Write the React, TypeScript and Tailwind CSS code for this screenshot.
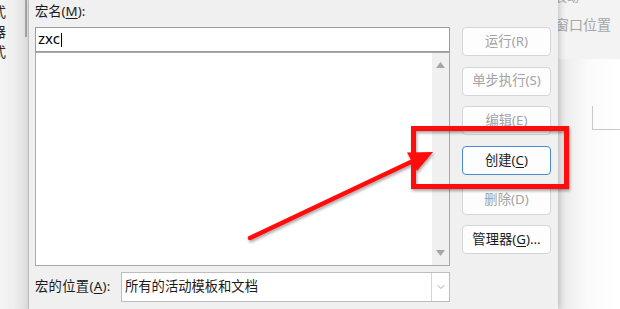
import { ChevronDown } from 'lucide-react';

const FONT = 'font-["Segoe_UI","Noto_Sans","Noto_Sans_CJK_SC",sans-serif]';

const BUTTONS = [
  { label: '运行(R)', enabled: false },
  { label: '单步执行(S)', enabled: false },
  { label: '编辑(E)', enabled: false },
  { label: '创建', key: 'C', enabled: true, focused: true },
  { label: '删除(D)', enabled: false },
  { label: '管理器', key: 'G', suffix: '...', enabled: true },
];

function MacroButton({ b }: { b: (typeof BUTTONS)[number] }) {
  return (
    <div
      className={
        'h-[29px] flex items-center justify-center rounded-[4px] bg-[#fdfdfd] text-[13.3px] border ' +
        (b.focused ? 'border-[#4a8ad6]' : 'border-[#d6d6d6]') +
        (b.enabled ? ' text-[#1a1a1a]' : ' text-[#a3a3a3]')
      }
    >
      {b.key ? (
        <span>
          {b.label}(<span className="underline underline-offset-2">{b.key}</span>){b.suffix}
        </span>
      ) : (
        b.label
      )}
    </div>
  );
}

export default function App() {
  return (
    <div className={`relative flex w-[620px] h-[309px] overflow-hidden bg-[#f3f3f3] ${FONT}`}>
      {/* window behind the dialog, left edge */}
      <div className="relative w-[29px] shrink-0 bg-gradient-to-r from-[#f4f4f4] via-[#efefef] to-[#dcdcdc] border-r border-[#c4c4c4]">
        <div className="flex flex-col -ml-[8px] pt-[2px] text-[14px] leading-[20px] text-[#2a2a2a]">
          <span>式</span>
          <span>器</span>
          <span>式</span>
        </div>
        <div className="absolute left-[25px] top-0 w-[2px] h-[37px] bg-[#a2a2a2]" />
      </div>

      {/* macro dialog */}
      <div className="relative z-10 w-[529px] shrink-0 flex bg-[#f0f0f0] pl-[6px] shadow-[2px_0_6px_rgba(0,0,0,0.18)]">
        <div className="w-[415px] flex flex-col">
          <div className="h-[27px] leading-[23px] text-[13.3px] text-[#1a1a1a]">
            宏名(<span className="underline underline-offset-2">M</span>):
          </div>
          <div className="h-[25px] bg-white border border-[#9c9c9c] flex items-center pl-[2px] text-[15px] text-black">
            <span className="leading-none -mt-[2px]">zxc</span>
            <span className="w-px h-[14px] bg-black ml-[1px]" />
          </div>
          <div className="h-[214px] bg-white border border-[#a9a9a9] flex justify-end">
            <div className="w-[17px] bg-[#f0f0f0] flex flex-col items-center justify-between py-[9px]">
              <svg width="9" height="6" viewBox="0 0 9 6">
                <path d="M4.5 0 L9 6 L0 6 Z" fill="#a6a6a6" />
              </svg>
              <svg width="9" height="6" viewBox="0 0 9 6">
                <path d="M0 0 L9 0 L4.5 6 Z" fill="#a6a6a6" />
              </svg>
            </div>
          </div>
          <div className="mt-[6px] flex items-center h-[30px]">
            <div className="w-[86px] text-[13.3px] text-[#1a1a1a] tracking-[0.3px]">
              宏的位置(<span className="underline underline-offset-2">A</span>):
            </div>
            <div className="w-[329px] h-[30px] bg-white border border-[#bdbdbd] flex items-center">
              <span className="flex-1 pl-[3px] text-[13.3px] text-[#1a1a1a]">所有的活动模板和文档</span>
              <div className="w-[18px] h-full border-l border-[#d4d4d4] flex items-center justify-center">
                <ChevronDown size={12} strokeWidth={1.5} className="text-[#8a8a8a]" />
              </div>
            </div>
          </div>
        </div>
        <div className="w-[89px] ml-[12px] pt-[27px] flex flex-col gap-[10.7px]">
          {BUTTONS.map((b) => (
            <MacroButton key={b.label} b={b} />
          ))}
        </div>
      </div>

      {/* window behind the dialog, right side */}
      <div className="flex-1 flex flex-col overflow-hidden">
        <div className="h-[59px] bg-[#f3f3f3] -ml-[3px] text-[14px] text-[#a6a6a6] leading-[20px]">
          <div className="-mt-[12px] text-[12px]">装动</div>
          <div className="mt-[7px] whitespace-nowrap">窗口位置</div>
        </div>
        <div className="flex-1 bg-gradient-to-r from-[#e8e8e8] via-[#fbfbfb] to-white pt-[47px] pl-[34px]">
          <div className="h-[24px] border-l border-b border-[#c8c8c8]" />
        </div>
      </div>

      {/* annotation: red box and arrow */}
      <svg className="absolute inset-0 z-20 pointer-events-none" width="620" height="309" viewBox="0 0 620 309">
        <defs>
          <filter id="sh" x="-20%" y="-20%" width="140%" height="140%">
            <feDropShadow dx="1" dy="2" stdDeviation="1.5" floodColor="#000" floodOpacity="0.35" />
          </filter>
        </defs>
        <g filter="url(#sh)">
          <rect x="413.5" y="128.5" width="153" height="58" fill="none" stroke="#ff0a0a" strokeWidth="5" />
          <line x1="250" y1="238" x2="414" y2="160.5" stroke="#ff0a0a" strokeWidth="4.5" strokeLinecap="round" />
          <path d="M433 152 L407 152.5 L417 171 Z" fill="#ff0a0a" />
        </g>
      </svg>
    </div>
  );
}
